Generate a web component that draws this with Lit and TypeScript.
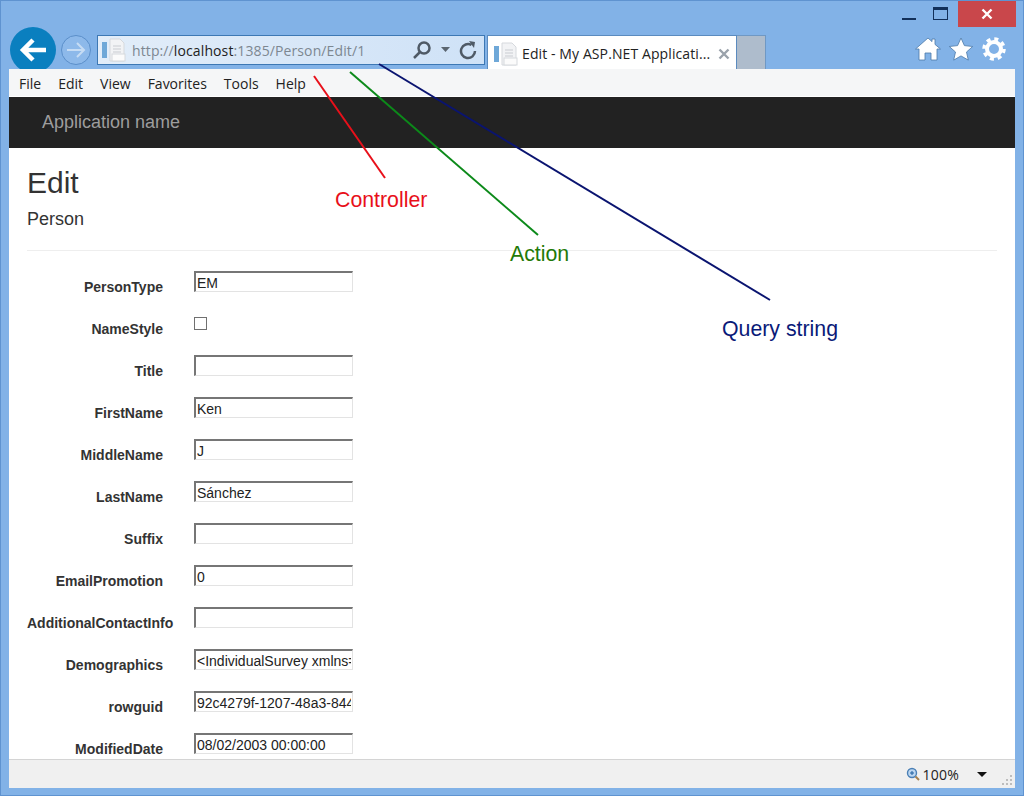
import { LitElement, html, css, svg } from 'lit';
import { customElement } from 'lit/decorators.js';

const MENU = ['File', 'Edit', 'View', 'Favorites', 'Tools', 'Help'];

const FIELDS: [string, string][] = [
  ['PersonType', 'EM'],
  ['NameStyle', ''],
  ['Title', ''],
  ['FirstName', 'Ken'],
  ['MiddleName', 'J'],
  ['LastName', 'Sánchez'],
  ['Suffix', ''],
  ['EmailPromotion', '0'],
  ['AdditionalContactInfo', ''],
  ['Demographics', '<IndividualSurvey xmlns="http://schemas.microsoft.com/sqlserver"'],
  ['rowguid', '92c4279f-1207-48a3-8448-4636514eb7e2'],
  ['ModifiedDate', '08/02/2003 00:00:00']
];

const pageIcon = html`<svg class="page-icon" width="26" height="26" viewBox="0 0 26 26">
  <rect x="1" y="5" width="5" height="16" fill="#6fa8d8" />
  <path d="M9 2h10l4 4v18H9z" fill="#f2f3f5" stroke="#d6d9dd" />
  <path d="M12 9h8M12 12h8M12 15h8" stroke="#c9ccd1" />
  <rect x="11" y="17" width="13" height="7" fill="#fbfbfb" stroke="#d6d9dd" />
</svg>`;

@customElement('app-root')
export class AppRoot extends LitElement {
  static styles = css`
    :host {
      display: flex;
      flex-direction: column;
      position: relative;
      width: 1024px;
      height: 796px;
      box-sizing: border-box;
      overflow: hidden;
      background: #82b2e7;
      border: 1px solid #5f93d0;
      font-family: 'Liberation Sans', Arial, sans-serif;
    }
    .caption {
      display: flex;
      justify-content: flex-end;
      align-items: flex-start;
      height: 26px;
      padding-right: 7px;
      flex: none;
    }
    .win-btn {
      display: flex;
      align-items: center;
      justify-content: center;
      width: 29px;
      height: 26px;
    }
    .win-max {
      width: 34px;
    }
    .win-close {
      width: 58px;
      background: #c9474b;
    }
    .nav {
      display: flex;
      align-items: flex-start;
      height: 42px;
      flex: none;
      overflow: hidden;
      padding-left: 9px;
    }
    .back {
      flex: none;
      width: 46px;
      height: 46px;
      border-radius: 50%;
      background: #0a7fbf;
      display: flex;
      align-items: center;
      justify-content: center;
    }
    .forward {
      flex: none;
      width: 30px;
      height: 30px;
      margin: 8px 0 0 5px;
      box-sizing: border-box;
      border-radius: 50%;
      border: 1px solid #5b8fca;
      background: #8db9ea;
      display: flex;
      align-items: center;
      justify-content: center;
    }
    .address {
      flex: none;
      width: 388px;
      height: 30px;
      box-sizing: border-box;
      margin: 8px 0 0 6px;
      padding-left: 3px;
      border: 1px solid #3d78b4;
      background: linear-gradient(90deg, #e2edf9, #cfe2f7);
      display: flex;
      align-items: center;
      font: 14px 'Open Sans', sans-serif;
      letter-spacing: 0.11px;
      color: #7d8791;
    }
    .address b {
      font-weight: 400;
      color: #222;
    }
    .url {
      margin-left: 5px;
      flex: 1;
      white-space: nowrap;
    }
    .addr-tools {
      display: flex;
      align-items: center;
      gap: 9px;
      padding-right: 7px;
    }
    .tab {
      flex: none;
      width: 250px;
      height: 35px;
      box-sizing: border-box;
      margin: 8px 0 0 2px;
      padding: 1px 6px 0 5px;
      border: 1px solid #5b8bbf;
      border-bottom: none;
      background: #fff;
      display: flex;
      align-items: center;
      font: 14px 'Open Sans', sans-serif;
      color: #222;
    }
    .tab-title {
      flex: 1;
      margin-left: 3px;
      white-space: nowrap;
      letter-spacing: 0.1px;
    }
    .tab-new {
      flex: none;
      width: 29px;
      height: 35px;
      box-sizing: border-box;
      margin-top: 8px;
      border: 1px solid #6f98c4;
      border-left: none;
      border-bottom: none;
      background: #aebccc;
    }
    .tools {
      margin-left: auto;
      display: flex;
      gap: 7px;
      padding: 10px 16px 0 0;
    }
    .viewport {
      flex: 1;
      min-height: 0;
      margin: 0 8px 7px;
      display: flex;
      flex-direction: column;
      background: #fff;
    }
    .menu {
      flex: none;
      display: flex;
      gap: 17px;
      align-items: center;
      height: 27px;
      box-sizing: border-box;
      padding: 2px 0 0 10px;
      background: #f5f6f7;
      font: 14px 'Open Sans', sans-serif;
      color: #222;
    }
    .page {
      flex: 1;
      min-height: 0;
      overflow: hidden;
    }
    .navbar {
      height: 51px;
      margin-top: 1px;
      padding-left: 33px;
      display: flex;
      align-items: center;
      background: #222;
      color: #9d9d9d;
      font-size: 18px;
    }
    .body {
      padding: 0 18px;
      color: #333;
    }
    h2 {
      margin: 0;
      padding-top: 18px;
      font-size: 30px;
      line-height: 33px;
      font-weight: 400;
    }
    h4 {
      margin: 10px 0 0;
      font-size: 18px;
      line-height: 20px;
      font-weight: 400;
    }
    hr {
      margin: 21px 0 20px;
      border: none;
      border-top: 1px solid #eee;
    }
    .row {
      display: flex;
      align-items: flex-start;
      height: 42px;
    }
    label {
      flex: none;
      width: 136px;
      padding-top: 8px;
      text-align: right;
      white-space: nowrap;
      font-size: 14px;
      line-height: 17px;
      font-weight: 700;
    }
    .ctl {
      margin-left: 31px;
    }
    input[type='text'] {
      display: block;
      width: 159px;
      height: 21px;
      box-sizing: border-box;
      margin: 0;
      padding: 1px 1px 0;
      border: 1px solid #e3e3e3;
      border-top: 2px solid #767676;
      border-left: 2px solid #767676;
      border-radius: 0;
      background: #fff;
      color: #222;
      font: 14px 'Liberation Sans', Arial, sans-serif;
      outline: none;
    }
    .check {
      width: 13px;
      height: 13px;
      margin: 4px 0 0;
      box-sizing: border-box;
      border: 1px solid #707070;
      background: #fff;
    }
    .status {
      flex: none;
      height: 29px;
      box-sizing: border-box;
      border-top: 1px solid #d4d4d4;
      background: #f0f0f0;
      display: flex;
      align-items: center;
      justify-content: flex-end;
      padding-right: 2px;
      font: 14px 'Open Sans', sans-serif;
      color: #222;
    }
    .zoom-val {
      margin-left: 3px;
      letter-spacing: 0.2px;
    }
    .caret {
      width: 0;
      height: 0;
      margin: 0 14px 0 18px;
      border: 5px solid transparent;
      border-top: 5px solid #111;
      border-bottom: none;
    }
    .grip {
      align-self: flex-end;
      margin-bottom: 2px;
    }
    .notes {
      position: absolute;
      left: -1px;
      top: -1px;
      pointer-events: none;
    }
    .note {
      position: absolute;
      font-size: 21.3px;
      line-height: 24px;
      white-space: nowrap;
    }
    .controller {
      left: 334px;
      top: 187px;
      color: #e8101a;
    }
    .action {
      left: 509px;
      top: 241px;
      color: #1f7a08;
    }
    .query {
      left: 721px;
      top: 316px;
      color: #0a1a78;
    }
  `;

  renderRow([name, value]: [string, string]) {
    return html`<div class="row">
      <label>${name}</label>
      <div class="ctl">
        ${name === 'NameStyle'
          ? html`<div class="check"></div>`
          : html`<input type="text" .value=${value} />`}
      </div>
    </div>`;
  }

  renderNotes() {
    return html`<svg class="notes" width="1024" height="796" fill="none" stroke-width="2">
      ${svg`<path d="M314 76L385 178" stroke="#e8101a" />
      <path d="M350 72L538 235" stroke="#0c8a1a" />
      <path d="M379 64L770 300" stroke="#0a1470" />`}
    </svg>`;
  }

  render() {
    return html`
      <div class="caption">
        <div class="win-btn">
          <svg width="16" height="16"><rect x="0" y="12" width="14" height="2" fill="#12305a" /></svg>
        </div>
        <div class="win-btn win-max">
          <svg width="16" height="14" fill="none"><rect x=".5" y=".5" width="14" height="12" stroke="#12305a" /><rect x="1" y="1" width="13" height="2" fill="#12305a" /></svg>
        </div>
        <div class="win-btn win-close">
          <svg width="12" height="12" stroke="#fff" stroke-width="2.4"><path d="M1.5 1.5l9 9M10.5 1.5l-9 9" /></svg>
        </div>
      </div>
      <div class="nav">
        <div class="back">
          <svg width="28" height="26" fill="none" stroke="#fff" stroke-width="4.5"><path d="M14 3L4 13l10 10M5 13h22" /></svg>
        </div>
        <div class="forward">
          <svg width="20" height="18" fill="none" stroke="#c6dcf4" stroke-width="2"><path d="M11 2l7 7-7 7M1 9h16" /></svg>
        </div>
        <div class="address">
          ${pageIcon}
          <span class="url">http://<b>localhost</b>:1385/Person/Edit/1</span>
          <span class="addr-tools">
            <svg width="20" height="20" fill="none" stroke="#4f5a66" stroke-width="2.5"><circle cx="12" cy="8" r="5.5" /><path d="M8 12l-6 6" /></svg>
            <svg width="9" height="6"><path d="M0 0h9L4.5 5z" fill="#5a6570" /></svg>
            <svg width="18" height="20" fill="none" stroke="#4f5a66" stroke-width="2.5"><path d="M12.5 5a7 7 0 1 0 3.5 6" /><path d="M10 1l6 1-1 6z" fill="#4f5a66" stroke="none" /></svg>
          </span>
        </div>
        <div class="tab">
          ${pageIcon}
          <span class="tab-title">Edit - My ASP.NET Applicati...</span>
          <svg width="12" height="12" stroke="#9aa2ab" stroke-width="2.4"><path d="M1.5 1.5l9 9M10.5 1.5l-9 9" /></svg>
        </div>
        <div class="tab-new"></div>
        <div class="tools">
          <svg width="26" height="24" fill="#fff" stroke="#4d7aa8" stroke-width=".8"><path d="M13 1l4 3.6V2h3v5.4L25.5 12H22v11h-6v-7h-6v7H4V12H.5z" /></svg>
          <svg width="26" height="24" fill="#fff" stroke="#4d7aa8" stroke-width=".8"><path d="M13 1l3.4 7.6 8.3.9-6.2 5.5 1.8 8.1-7.3-4.2-7.3 4.2 1.8-8.1L1.3 9.5l8.3-.9z" /></svg>
          <svg width="26" height="24" viewBox="0 0 26 24" fill="none"><circle cx="13" cy="12" r="7" stroke="#fff" stroke-width="4" /><circle cx="13" cy="12" r="10" stroke="#fff" stroke-width="3.5" stroke-dasharray="4 3.85" /></svg>
        </div>
      </div>
      <div class="viewport">
        <div class="menu">${MENU.map((m) => html`<span>${m}</span>`)}</div>
        <div class="page">
          <div class="navbar">Application name</div>
          <div class="body">
            <h2>Edit</h2>
            <h4>Person</h4>
            <hr />
            ${FIELDS.map((f) => this.renderRow(f))}
          </div>
        </div>
        <div class="status">
          <svg width="14" height="14" fill="none"><circle cx="6" cy="6" r="4.5" fill="#bcd6f0" stroke="#4a7fb5" stroke-width="1.4" /><path d="M4 6h4M6 4v4" stroke="#1f5f9f" /><path d="M9.5 9.5l3.5 3.5" stroke="#a8814e" stroke-width="2" /></svg>
          <span class="zoom-val">100%</span>
          <span class="caret"></span>
          <svg class="grip" width="12" height="12" fill="#bdbdbd"><rect x="9" y="1" width="2" height="2" /><rect x="5" y="5" width="2" height="2" /><rect x="9" y="5" width="2" height="2" /><rect x="1" y="9" width="2" height="2" /><rect x="5" y="9" width="2" height="2" /><rect x="9" y="9" width="2" height="2" /></svg>
        </div>
      </div>
      ${this.renderNotes()}
      <span class="note controller">Controller</span>
      <span class="note action">Action</span>
      <span class="note query">Query string</span>
    `;
  }
}
